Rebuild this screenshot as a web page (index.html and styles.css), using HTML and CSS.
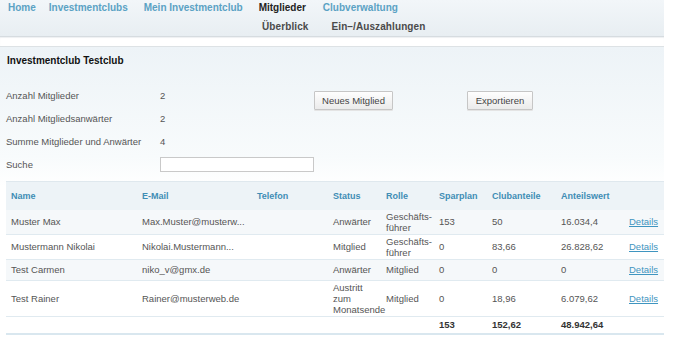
FILE: index.html
```html
<!DOCTYPE html>
<html lang="de">
<head>
<meta charset="utf-8">
<title>Mitglieder</title>
<link rel="stylesheet" href="styles.css">
</head>
<body>
<div class="page">
  <div class="nav">
    <div class="menu">
      <a class="mi mi-home">Home</a>
      <a class="mi">Investmentclubs</a>
      <a class="mi">Mein Investmentclub</a>
      <a class="mi active">Mitglieder</a>
      <a class="mi mi-last">Clubverwaltung</a>
    </div>
    <div class="submenu">
      <a class="si">Überblick</a>
      <a class="si">Ein–/Auszahlungen</a>
    </div>
  </div>
  <div class="band"></div>
  <div class="content">
    <h1 class="title">Investmentclub Testclub</h1>
    <div class="info">
      <div class="lbl">Anzahl Mitglieder</div>
      <div class="val">2</div>
      <div class="btns">
        <button class="btn btn-new">Neues Mitglied</button>
        <button class="btn btn-exp">Exportieren</button>
      </div>
      <div class="lbl">Anzahl Mitgliedsanwärter</div>
      <div class="val">2</div>
      <div class="empty"></div>
      <div class="lbl">Summe Mitglieder und Anwärter</div>
      <div class="val">4</div>
      <div class="empty"></div>
      <div class="lbl">Suche</div>
      <div class="val"><input class="search" type="text"></div>
      <div class="empty"></div>
    </div>
    <table class="members">
      <colgroup>
        <col class="c-name"><col class="c-mail"><col class="c-tel"><col class="c-status"><col class="c-rolle"><col class="c-spar"><col class="c-club"><col class="c-wert"><col class="c-det">
      </colgroup>
      <thead>
        <tr>
          <th>Name</th><th>E-Mail</th><th>Telefon</th><th>Status</th><th>Rolle</th><th>Sparplan</th><th>Clubanteile</th><th>Anteilswert</th><th></th>
        </tr>
      </thead>
      <tbody>
        <tr class="alt">
          <td>Muster Max</td><td>Max.Muster@musterw...</td><td></td><td>Anwärter</td><td>Geschäfts-führer</td><td>153</td><td>50</td><td>16.034,4</td><td><a class="det">Details</a></td>
        </tr>
        <tr>
          <td>Mustermann Nikolai</td><td>Nikolai.Mustermann...</td><td></td><td>Mitglied</td><td>Geschäfts-führer</td><td>0</td><td>83,66</td><td>26.828,62</td><td><a class="det">Details</a></td>
        </tr>
        <tr class="alt">
          <td>Test Carmen</td><td>niko_v@gmx.de</td><td></td><td>Anwärter</td><td>Mitglied</td><td>0</td><td>0</td><td>0</td><td><a class="det">Details</a></td>
        </tr>
        <tr>
          <td>Test Rainer</td><td>Rainer@musterweb.de</td><td></td><td>Austritt zum Monatsende</td><td>Mitglied</td><td>0</td><td>18,96</td><td>6.079,62</td><td><a class="det">Details</a></td>
        </tr>
      </tbody>
      <tfoot>
        <tr class="sum">
          <td></td><td></td><td></td><td></td><td></td><td>153</td><td>152,62</td><td>48.942,64</td><td></td>
        </tr>
      </tfoot>
    </table>
  </div>
</div>
</body>
</html>
```

FILE: styles.css
```css
html, body {
  margin: 0;
  padding: 0;
  background: #ffffff;
}
body {
  font-family: "Liberation Sans", Arial, sans-serif;
  color: #555555;
}
.page {
  width: 664px;
}
.nav {
  height: 36px;
  border-bottom: 1px solid #d6dce0;
  background: linear-gradient(#f2f6f9, #e8eef2);
  box-sizing: content-box;
}
.menu {
  display: flex;
  gap: 16px;
  padding-left: 8px;
  height: 16px;
  line-height: 16px;
}
.mi {
  font-size: 10px;
  font-weight: bold;
  color: #5ba2c4;
}
.mi-home {
  margin-right: -3px;
}
.mi-last {
  margin-left: 1px;
}
.mi.active {
  color: #222222;
}
.submenu {
  display: flex;
  gap: 23px;
  padding-left: 262px;
  margin-top: 3px;
  height: 16px;
  line-height: 16px;
}
.si {
  font-size: 10px;
  font-weight: bold;
  color: #4a4a4a;
  letter-spacing: 0.1px;
}
.band {
  height: 9px;
  background: #ffffff;
  border-bottom: 1px solid #dde2e5;
  box-shadow: inset 0 1px 1px #eef0f2;
}
.content {
  background: linear-gradient(#edf3f7, #f8fbfc 110px, #ffffff 140px);
  padding-top: 8px;
  padding-bottom: 12px;
}
.title {
  margin: 0 0 0 7px;
  font-size: 10px;
  line-height: 12px;
  font-weight: bold;
  color: #111111;
}
.info {
  margin-top: 17px;
  display: grid;
  grid-template-columns: 154px 154px 1fr;
  grid-template-rows: repeat(4, 23px);
  padding-left: 6px;
  font-size: 9.5px;
  color: #555555;
}
.lbl, .val {
  display: flex;
  align-items: center;
}
.btns {
  display: flex;
  gap: 74px;
  align-items: flex-start;
  padding-top: 7px;
}
.btn {
  font-family: "Liberation Sans", Arial, sans-serif;
  font-size: 9.5px;
  color: #444444;
  height: 19px;
  padding: 0;
  border: 1px solid #c6c6c6;
  border-radius: 1px;
  background: linear-gradient(#fefefe, #ebebeb);
  box-shadow: 0 1px 0 #e4e4e4;
}
.btn-new {
  width: 79px;
}
.btn-exp {
  width: 66px;
}
.search {
  width: 154px;
  height: 15px;
  box-sizing: border-box;
  border: 1px solid #c9c9c9;
  background: #ffffff;
  margin: 0;
  padding: 0 2px;
}
.members {
  margin: 5px 0 0 6px;
  width: 658px;
  border-collapse: collapse;
  table-layout: fixed;
  font-size: 9.5px;
}
.c-name { width: 131px; }
.c-mail { width: 115px; }
.c-tel { width: 76px; }
.c-status { width: 53px; }
.c-rolle { width: 53px; }
.c-spar { width: 53px; }
.c-club { width: 69px; }
.c-wert { width: 68px; }
.c-det { width: 40px; }
.members thead tr {
  height: 28px;
  background: #edf3f7;
  border-top: 1px solid #dfe8ee;
}
.members th {
  text-align: left;
  font-size: 9px;
  font-weight: bold;
  color: #3f8db5;
  padding: 0 5px;
  white-space: nowrap;
}
.members tbody tr {
  height: 21px;
  border-bottom: 1px solid #e0eaf0;
}
.members tbody tr.alt {
  background: #f5f8fa;
}
.members td {
  padding: 1px 5px;
  line-height: 11px;
  color: #555555;
  vertical-align: middle;
  white-space: normal;
}
.det {
  color: #3f95c0;
  text-decoration: underline;
}
.members tfoot tr.sum {
  height: 18px;
  border-top: 1px solid #d6e5ee;
  border-bottom: 2px solid #d9e7ef;
}
.members tfoot td {
  font-weight: bold;
  color: #333333;
}
```
